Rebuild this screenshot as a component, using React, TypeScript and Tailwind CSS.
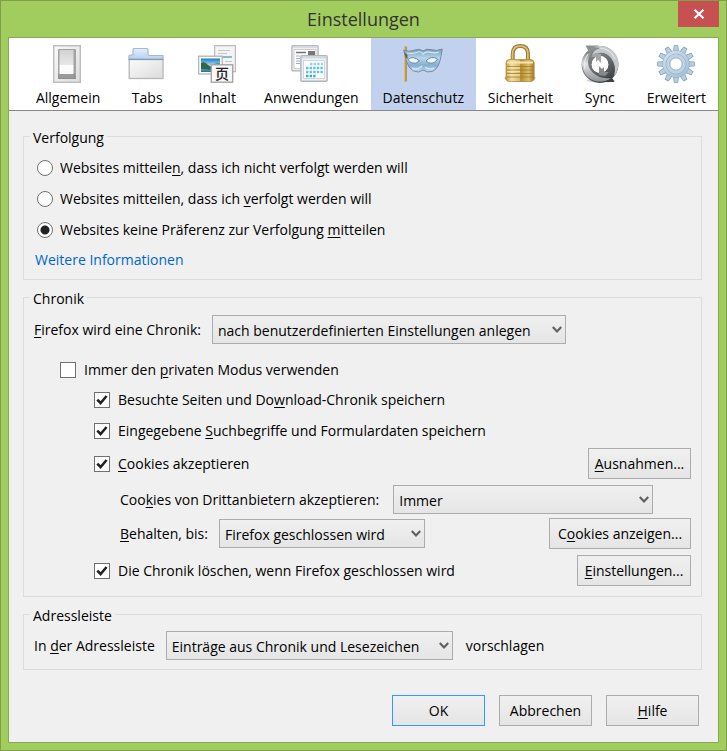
import React from 'react';

interface TabProps {
  label: string;
  isActive?: boolean;
  children: React.ReactNode;
}

const Tab: React.FC<TabProps> = ({ label, isActive, children }: TabProps) => (
  <button
    type="button"
    role="tab"
    aria-selected={!!isActive}
    className={`flex min-w-[70px] flex-col items-center gap-1 px-3 pt-1.5 pb-0.5 ${isActive ? 'bg-[#c2d2ee]' : ''}`}
  >
    <svg width="40" height="40" viewBox="0 0 40 40" fill="none" aria-hidden="true">
      {children}
    </svg>
    <span className="leading-5">{label}</span>
  </button>
);

interface GroupProps {
  title: string;
  className?: string;
  children: React.ReactNode;
}

const Group: React.FC<GroupProps> = ({ title, className, children }: GroupProps) => (
  <fieldset className={`min-w-0 border border-[#dcdcdc] px-2.5 ${className}`}>
    <legend className="-ml-1 h-5 px-[3px] leading-6">{title}</legend>
    {children}
  </fieldset>
);

interface ChoiceProps {
  id: string;
  isChecked?: boolean;
  children: React.ReactNode;
}

const Radio: React.FC<ChoiceProps> = ({ id, isChecked, children }: ChoiceProps) => (
  <div className="flex h-[31px] items-center gap-[7px] pl-[3px]">
    <input
      id={id}
      type="radio"
      name="tracking"
      defaultChecked={isChecked}
      className="size-4 shrink-0 appearance-none rounded-full border border-[#707070] bg-white checked:bg-[radial-gradient(circle,#222_4px,#fff_5px)]"
    />
    <label htmlFor={id}>{children}</label>
  </div>
);

const Checkbox: React.FC<ChoiceProps> = ({ id, isChecked, children }: ChoiceProps) => (
  <div className="flex items-center gap-2">
    <span className="grid shrink-0">
      <input
        id={id}
        type="checkbox"
        defaultChecked={isChecked}
        className="peer col-start-1 row-start-1 size-4 appearance-none border border-[#707070] bg-white"
      />
      <svg
        viewBox="0 0 16 16"
        className="pointer-events-none invisible col-start-1 row-start-1 size-4 peer-checked:visible"
        fill="none"
        aria-hidden="true"
      >
        <path d="M3.3 7.6L6.6 11L12.6 4" stroke="#222" strokeWidth="2.6" />
      </svg>
    </span>
    <label htmlFor={id}>{children}</label>
  </div>
);

interface DropdownProps {
  id: string;
  value: string;
  className: string;
}

const Dropdown: React.FC<DropdownProps> = ({ id, value, className }: DropdownProps) => (
  <span className={`grid ${className}`}>
    <select
      id={id}
      className="col-start-1 row-start-1 h-[29px] w-full appearance-none border border-[#acacac] bg-linear-to-b from-[#f0f0f0] to-[#e5e5e5] pt-0.5 pr-6 pl-[5px]"
    >
      <option>{value}</option>
    </select>
    <svg
      viewBox="0 0 10 8"
      className="pointer-events-none col-start-1 row-start-1 mr-1 h-2 w-2.5 self-center justify-self-end"
      fill="none"
      aria-hidden="true"
    >
      <path d="M0.8 1L5 5.4L9.2 1" stroke="#606060" strokeWidth="2.2" />
    </svg>
  </span>
);

interface ButtonProps {
  className: string;
  children: React.ReactNode;
}

const Button: React.FC<ButtonProps> = ({ className, children }: ButtonProps) => (
  <button
    type="button"
    className={`h-[31px] shrink-0 border bg-linear-to-b from-[#f0f0f0] to-[#e5e5e5] ${className}`}
  >
    {children}
  </button>
);

const Key: React.FC<{ children: React.ReactNode }> = ({ children }) => (
  <span className="underline underline-offset-2">{children}</span>
);

const GEAR_TEETH = [0, 30, 60, 90, 120, 150, 180, 210, 240, 270, 300, 330];

const Toolbar: React.FC = () => (
  <div role="tablist" className="flex border-b border-[#888] bg-white pl-[15px]">
    <Tab label="Allgemein">
      <defs>
        <linearGradient id="plate" x1="0" y1="0" x2="1" y2="1">
          <stop stopColor="#fafafa" />
          <stop offset="1" stopColor="#dcdcdc" />
        </linearGradient>
        <linearGradient id="rocker" x1="0" y1="0" x2="0" y2="1">
          <stop stopColor="#d2d2d2" />
          <stop offset="1" stopColor="#e8e8e8" />
        </linearGradient>
      </defs>
      <rect x="5.7" y="1.7" width="26.6" height="36.6" fill="url(#plate)" stroke="#bcbcbc" strokeWidth="1.4" />
      <rect x="10" y="5" width="18" height="30" rx="1" fill="#a3a3a3" />
      <path d="M10 31L12 29H26L28 35H10Z" fill="#8d8d8d" />
      <rect x="11.5" y="6" width="14" height="15.5" fill="url(#rocker)" />
      <rect x="11.5" y="21" width="14" height="9" fill="#fbfbfb" />
      <path d="M11.5 30H25.5L26.5 34H10.5Z" fill="#9b9b9b" />
    </Tab>
    <Tab label="Tabs">
      <defs>
        <linearGradient id="tabTop" x1="0" y1="0" x2="0" y2="1">
          <stop stopColor="#e3efff" />
          <stop offset="1" stopColor="#b5d0f4" />
        </linearGradient>
      </defs>
      <path d="M2 15V12Q2 11 3 11H5Q6 11 6 10V5.5Q6 4.5 7 4.5H20Q21 4.5 21 5.5V10Q21 11.5 22.5 11.5H36V15Z" fill="url(#tabTop)" stroke="#aeb6c2" strokeWidth="1.2" />
      <rect x="2.2" y="15.5" width="33.8" height="19" fill="url(#plate)" stroke="#b7b7b7" strokeWidth="1.3" />
      <path d="M1.5 15.5H36.5" stroke="#8499ba" strokeWidth="1.2" />
    </Tab>
    <Tab label="Inhalt">
      <defs>
        <linearGradient id="sky" x1="0" y1="0" x2="0" y2="1">
          <stop stopColor="#1d78c8" />
          <stop offset="0.55" stopColor="#b4e5f8" />
          <stop offset="1" stopColor="#246aa0" />
        </linearGradient>
      </defs>
      <rect x="17.6" y="1.6" width="20.8" height="26" fill="#f4f4f4" stroke="#bdbdbd" strokeWidth="1.3" />
      <path d="M21 6.5H33M21 9.5H30M28 17.5H35" stroke="#c6c6c6" />
      <path d="M20 13H35" stroke="#65afc0" strokeWidth="1.6" />
      <rect x="1.7" y="12.2" width="23.5" height="17.8" fill="#fff" stroke="#b4b4b4" strokeWidth="1.3" />
      <rect x="4" y="14.5" width="19" height="13.5" fill="url(#sky)" />
      <path d="M4 19Q8 17 11 21Q14 23 17 24L23 22V26L15 26L4 25Z" fill="#2b6a45" />
      <path d="M14 24Q18 18 23 19V24Z" fill="#5a9b7d" />
      <rect x="14.3" y="20.8" width="21.4" height="17.4" fill="#f8f8f8" stroke="#a5a5a5" strokeWidth="1.4" />
      <text x="18" y="35" fontSize="14" fontWeight="500" fontFamily="Noto Sans CJK SC, sans-serif" fill="#222">页</text>
    </Tab>
    <Tab label="Anwendungen">
      <rect x="0.9" y="1.7" width="26.2" height="25" rx="1" fill="#f4f4f4" stroke="#b9b9b9" strokeWidth="1.4" />
      <path d="M2 3.2H26" stroke="#d2dde6" strokeWidth="2" />
      <rect x="3" y="5.5" width="22" height="19" fill="#fff" stroke="#ccc" />
      <path d="M5 8.5H15" stroke="#777" strokeWidth="1.6" />
      <path d="M5 12H9M5 14.5H9M5 17H9M5 19.5H9" stroke="#9badcf" strokeWidth="1.2" />
      <rect x="17" y="7" width="7" height="5" fill="#777" />
      <rect x="9.9" y="11.7" width="26.2" height="25.5" rx="1" fill="#eef3f6" stroke="#afb4b7" strokeWidth="1.4" />
      <path d="M11 13.5H35" stroke="#cbdbe5" strokeWidth="2" />
      <rect x="12.5" y="16.5" width="21" height="18" fill="#fff" stroke="#cdd6db" />
      <path d="M19 20H32" stroke="#91d3ec" strokeWidth="2.4" strokeDasharray="2.4 1.2" />
      <path d="M15 24H32M15 28H32" stroke="#62bfdd" strokeWidth="2.4" strokeDasharray="2.4 1.2" />
      <path d="M15 32H25" stroke="#3ba8c9" strokeWidth="2.4" strokeDasharray="2.4 1.2" />
    </Tab>
    <Tab label="Datenschutz" isActive>
      <defs>
        <linearGradient id="mask" x1="0" y1="0" x2="0" y2="1">
          <stop stopColor="#7999b6" />
          <stop offset="0.4" stopColor="#b6d6ee" />
          <stop offset="0.7" stopColor="#86add0" />
          <stop offset="1" stopColor="#bfdced" />
        </linearGradient>
      </defs>
      <rect x="1" y="2.5" width="3" height="35" fill="#b9964b" />
      <path d="M1.6 3V37" stroke="#e2c475" />
      <path d="M0.7 6Q6 8.5 12 6Q17 4.2 20 7Q23 4.2 28 5.6Q34 7.6 39.2 5Q38.5 12 36.6 18Q34.5 25.5 29 27.5Q24 29 20 26Q15.5 29.5 10.5 27Q5 24 3.4 17Q2 11 0.7 6Z" fill="url(#mask)" stroke="#738ea8" strokeWidth="1" />
      <path d="M4 9Q11 10 15 8Q18 7 20 10Q23 7 28 8.4Q32 9.5 36 8" stroke="#d2e8f5" strokeWidth="1.2" />
      <path d="M5 15.5Q10 11 16.5 17Q13 20.5 9 19Q6.5 18 5 15.5ZM23 17Q28.5 11 34.5 15Q33 18.5 29 19.3Q25.5 19.5 23 17Z" fill="#edf5fd" stroke="#6987a5" strokeWidth="1" />
      <path d="M9 24Q14 27 19 22M22 23Q27 26.5 31 24" stroke="#cee5f3" strokeWidth="1.5" />
      <path d="M1 8L4.5 11V15L3 14Z" fill="#705e30" />
    </Tab>
    <Tab label="Sicherheit">
      <defs>
        <linearGradient id="brass" x1="0" y1="0" x2="1" y2="0">
          <stop stopColor="#c49c46" />
          <stop offset="0.2" stopColor="#f1dfa5" />
          <stop offset="0.48" stopColor="#d8b968" />
          <stop offset="0.52" stopColor="#b68a30" />
          <stop offset="0.8" stopColor="#dcbd68" />
          <stop offset="1" stopColor="#a77d2c" />
        </linearGradient>
      </defs>
      <ellipse cx="20" cy="34" rx="15.5" ry="3.8" fill="#888" opacity="0.65" />
      <path d="M12.7 18V9.5Q13 2 20.3 2Q27.8 2 28 9.5V18" stroke="#9e7c37" strokeWidth="4" />
      <path d="M12.5 18V9.5Q13 2 20.3 2Q27.8 2 27.9 9.5V18" stroke="#ddc47c" strokeWidth="1.6" />
      <path d="M6 19Q6 16 9 15.5H31Q34 16 34.2 19V35Q34 37 31 37.5H9Q6 37 6 35Z" fill="url(#brass)" stroke="#ad8533" strokeWidth="0.7" />
      <path d="M7 18.5H33" stroke="#f5e7b8" strokeWidth="2" />
      <path d="M7 22.5H33.5M7 26H33.5M7 29.5H33.5M7 33H33.5" stroke="#98712a" strokeWidth="0.9" opacity="0.75" />
      <path d="M7 24H20M7 27.5H20M7 31H20" stroke="#f6e8b5" opacity="0.8" />
    </Tab>
    <Tab label="Sync">
      <defs>
        <linearGradient id="steelLight" x1="0" y1="0" x2="0" y2="1">
          <stop stopColor="#84888b" />
          <stop offset="0.4" stopColor="#dfe1e2" />
          <stop offset="1" stopColor="#8e9295" />
        </linearGradient>
        <linearGradient id="steelDark" gradientUnits="userSpaceOnUse" x1="6" y1="2" x2="32" y2="38">
          <stop stopColor="#8f9396" />
          <stop offset="0.5" stopColor="#6d7174" />
          <stop offset="1" stopColor="#3a3d3f" />
        </linearGradient>
      </defs>
      <ellipse cx="21" cy="36.5" rx="14" ry="2" fill="#999" opacity="0.45" />
      <circle cx="20" cy="20.5" r="13.3" stroke="url(#steelDark)" strokeWidth="10.2" />
      <path d="M5.5 1.5H19L15 6L9 8Z" fill="#8c9093" />
      <path d="M34.5 38H21L25 34L31 32Z" fill="#3e4143" />
      <path d="M14 3Q25 0 33 7Q40 14 38 24Q37 29 34 32Q37 22 31 14Q26 8 19 9Q15 9 12 12Q13 6 20 4Z" fill="#c6c9cb" />
      <path d="M2 15Q1 28 9 34Q16 39 25 37Q29 36 31 34Q22 35 16 31Q9 27 8 19Q8 13 12 8Q4 10 2 15Z" fill="url(#steelLight)" />
      <circle cx="20" cy="20.5" r="8.4" fill="#fff" />
      <path d="M11 13H16V18L18 16L21 19V10L15 9Z" fill="#a3a7a9" />
      <path d="M29 28H24V23L22 25L19 22V31L25 32Z" fill="#85898b" />
      <path d="M8 10Q3 17 5 25" stroke="#f0f1f1" strokeWidth="1.2" opacity="0.8" />
      <path d="M20 4Q31 5 35 15" stroke="#edeeef" strokeWidth="1.2" opacity="0.8" />
    </Tab>
    <Tab label="Erweitert">
      <defs>
        <linearGradient id="gear" gradientUnits="userSpaceOnUse" x1="8" y1="4" x2="30" y2="36">
          <stop stopColor="#d6e4f0" />
          <stop offset="1" stopColor="#9fbbd3" />
        </linearGradient>
      </defs>
      {GEAR_TEETH.map((angle) => (
        <path
          key={angle}
          d="M17.4 8L18.2 1.4H21.8L22.6 8Z"
          fill="#b9d0e3"
          stroke="#86a5c0"
          strokeWidth="0.9"
          transform={`rotate(${angle} 20 20)`}
        />
      ))}
      <circle cx="20" cy="20" r="13.4" stroke="#8caac4" strokeWidth="1" />
      <circle cx="20" cy="20" r="10" stroke="url(#gear)" strokeWidth="6.4" />
      <circle cx="20" cy="20" r="10" stroke="#94b1ca" strokeWidth="0.8" />
      <circle cx="20" cy="20" r="8" stroke="#bed3e5" strokeWidth="3" />
      <circle cx="20" cy="20" r="6.2" stroke="#84a3bf" strokeWidth="0.9" />
    </Tab>
  </div>
);

const App: React.FC = () => (
  <div className="flex min-h-screen flex-col border border-[#7f9e4b] bg-[#a1cd5f] px-[7px] pb-[7px] font-['Open_Sans',sans-serif] text-[14px] leading-5 text-black">
    <header className="grid h-9 grid-cols-[1fr_auto_1fr] items-center">
      <h1 className="col-start-2 text-[18px] text-[#333]">Einstellungen</h1>
      <button
        type="button"
        aria-label="Schließen"
        className="flex h-[26px] w-[41px] items-center justify-center self-start justify-self-end bg-[#c75050]"
      >
        <svg width="12" height="10" viewBox="0 0 12 10" fill="none" aria-hidden="true">
          <path d="M1.5 0.8L10.5 9.2M10.5 0.8L1.5 9.2" stroke="#fff" strokeWidth="2.2" />
        </svg>
      </button>
    </header>

    <main className="flex grow flex-col border border-[#86ab4f] bg-[#f0f0f0]">
      <Toolbar />

      <form className="flex grow flex-col px-4 pt-[15px] pb-4 pl-3.5">
        <Group title="Verfolgung" className="pt-1.5 pb-1">
          <Radio id="track-deny">
            Websites mitteile<Key>n</Key>, dass ich nicht verfolgt werden will
          </Radio>
          <Radio id="track-allow">
            Websites mitteilen, dass ich <Key>v</Key>erfolgt werden will
          </Radio>
          <Radio id="track-none" isChecked>
            Websites keine Präferenz zur Verfolgung <Key>m</Key>itteilen
          </Radio>
          <a href="#info" className="flex h-[30px] items-center pl-px text-[#0066cc]">
            Weitere Informationen
          </a>
        </Group>

        <Group title="Chronik" className="mt-[7px] pt-2 pb-2.5">
          <div className="flex items-center gap-[11px]">
            <label htmlFor="history-mode">
              <Key>F</Key>irefox wird eine Chronik:
            </label>
            <Dropdown id="history-mode" value="nach benutzerdefinierten Einstellungen anlegen" className="w-[354px]" />
          </div>
          <div className="pt-[11px] pl-[26px]">
            <div className="flex h-[30px] items-center">
              <Checkbox id="private-mode">
                Immer den <Key>p</Key>rivaten Modus verwenden
              </Checkbox>
            </div>
            <div className="pl-[34px]">
              <div className="flex h-[30px] items-center">
                <Checkbox id="remember-history" isChecked>
                  Besuchte Seiten und Do<Key>w</Key>nload-Chronik speichern
                </Checkbox>
              </div>
              <div className="flex h-[31px] items-center">
                <Checkbox id="remember-forms" isChecked>
                  Eingegebene <Key>S</Key>uchbegriffe und Formulardaten speichern
                </Checkbox>
              </div>
              <div className="mt-0.5 flex items-center justify-between">
                <Checkbox id="accept-cookies" isChecked>
                  <Key>C</Key>ookies akzeptieren
                </Checkbox>
                <Button className="w-[103px] border-[#acacac]">
                  <Key>A</Key>usnahmen...
                </Button>
              </div>
              <div className="mt-1.5 flex items-center gap-3.5 pl-[26px]">
                <label htmlFor="third-party">
                  Coo<Key>k</Key>ies von Drittanbietern akzeptieren:
                </label>
                <Dropdown id="third-party" value="Immer" className="w-[260px]" />
              </div>
              <div className="mt-1 flex items-center gap-[11px] pl-[26px]">
                <label htmlFor="keep-until">
                  <Key>B</Key>ehalten, bis:
                </label>
                <Dropdown id="keep-until" value="Firefox geschlossen wird" className="w-[206px]" />
                <Button className="ml-auto w-[142px] border-[#acacac]">
                  C<Key>o</Key>okies anzeigen...
                </Button>
              </div>
              <div className="mt-1.5 flex items-center justify-between">
                <Checkbox id="clear-history" isChecked>
                  Die Chronik löschen, wenn Firefox <Key>g</Key>eschlossen wird
                </Checkbox>
                <Button className="w-[114px] border-[#acacac]">
                  <Key>E</Key>instellungen...
                </Button>
              </div>
            </div>
          </div>
        </Group>

        <Group title="Adressleiste" className="mt-[7px] pt-[7px] pb-[9px]">
          <div className="flex items-center gap-[11px]">
            <label htmlFor="suggest">
              In <Key>d</Key>er Adressleiste
            </label>
            <Dropdown id="suggest" value="Einträge aus Chronik und Lesezeichen" className="w-[287px]" />
            <span className="pl-0.5">vorschlagen</span>
          </div>
        </Group>

        <div className="mt-auto flex justify-end gap-3.5 pr-[3px]">
          <Button className="w-[93px] border-[#3399ff]">OK</Button>
          <Button className="w-[93px] border-[#acacac]">Abbrechen</Button>
          <Button className="w-[93px] border-[#acacac]">
            <Key>H</Key>ilfe
          </Button>
        </div>
      </form>
    </main>
  </div>
);

export default App;
